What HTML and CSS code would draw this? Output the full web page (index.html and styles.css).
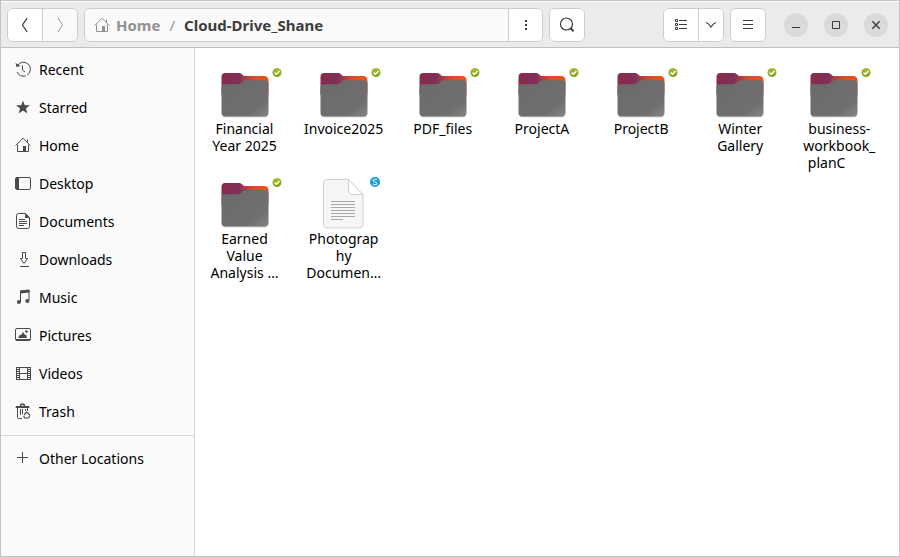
FILE: index.html
```html
<!DOCTYPE html>
<html lang="en">
<head>
  <meta charset="UTF-8" />
  <meta name="viewport" content="width=device-width, initial-scale=1.0" />
  <title>Cloud-Drive_Shane</title>
  <link rel="stylesheet" href="styles.css">
</head>
<body>
  <!-- shared symbols -->
  <svg class="defs" aria-hidden="true">
    <defs>
      <linearGradient id="tab" x1="0" y1="0" x2="1" y2="0">
        <stop offset="0" stop-color="#8a2a4c" />
        <stop offset="0.38" stop-color="#80305a" />
        <stop offset="0.5" stop-color="#a83c48" />
        <stop offset="0.68" stop-color="#d64c2a" />
        <stop offset="1" stop-color="#e95420" />
      </linearGradient>
      <linearGradient id="front" x1="0" y1="0" x2="1" y2="1">
        <stop offset="0" stop-color="#6b6b6b" />
        <stop offset="0.75" stop-color="#6f6f6f" />
        <stop offset="1" stop-color="#858585" />
      </linearGradient>
      <linearGradient id="ok" x1="0" y1="0" x2="0" y2="1">
        <stop offset="0" stop-color="#a3c23a" />
        <stop offset="1" stop-color="#7da010" />
      </linearGradient>
      <symbol id="home" viewBox="0 0 16 16">
        <path d="M.6 8.6 8 1.2l7.4 7.4M2.500 7.500v7h11v-7M12.500 2.500v3" fill="none" stroke="currentColor" />
        <path d="M8 9h3v6H8z" fill="currentColor" />
      </symbol>
      <symbol id="folder" viewBox="0 0 80 55">
        <path d="M20 8h14c1 0 2 .4 3 1.200l2 1.800h20c3 0 4.500 1.500 4.500 4.500V30h-47V11.500C16.500 9.500 18 8 20 8z" fill="url(#tab)" />
        <path d="M16.500 22c0-2 1-2.800 3-2.800h13.500c1.500 0 2.500-.4 3.500-1.400l1.600-1.500c.8-.8 1.600-1.100 2.900-1.100h19c2.500 0 3.500 1 3.500 3V48c0 2.200-1.300 3.500-3.500 3.500H20c-2.200 0-3.500-1.300-3.500-3.500z" fill="url(#front)" />
        <path d="M18 51c1 .6 2 .7 3 .7h38c1 0 2.500-.1 3.300-.9" fill="none" stroke="#a39a96" />
        <circle cx="72" cy="7.500" r="4.500" fill="url(#ok)" />
        <path d="M69.600 7.600l1.800 1.700 3.100-3.200" fill="none" stroke="#fff" stroke-width="1.500" />
      </symbol>
    </defs>
  </svg>

  <div class="window">
    <header class="toolbar">
      <div class="group">
        <button class="btn" aria-label="Back">
          <svg width="16" height="16"><path d="M10 .8C9.500 3 6.500 5.500 5.500 8c1 2.500 4 5 4.500 7.200" fill="none" stroke="currentColor" stroke-width="1.200" /></svg>
        </button>
        <button class="btn faded" aria-label="Forward">
          <svg width="16" height="16"><path d="M6 .8C6.500 3 9.500 5.500 10.500 8c-1 2.500-4 5-4.500 7.200" fill="none" stroke="currentColor" /></svg>
        </button>
      </div>

      <div class="group path">
        <nav class="crumbs">
          <a href="#" class="crumb"><svg width="16" height="16"><use href="#home" /></svg>Home</a>
          <span class="slash">/</span>
          <a href="#" class="crumb current">Cloud-Drive_Shane</a>
        </nav>
        <button class="btn" aria-label="Folder menu">
          <svg width="16" height="16"><path d="M7 3h2v2H7zM7 7h2v2H7zM7 11h2v2H7z" fill="currentColor" /></svg>
        </button>
      </div>

      <div class="group">
        <button class="btn" aria-label="Search">
          <svg width="16" height="16"><circle cx="7.500" cy="7" r="6" fill="none" stroke="currentColor" stroke-width="1.200" /><path d="M11.500 11l3 3.300" stroke="currentColor" stroke-width="1.900" /></svg>
        </button>
      </div>

      <div class="group push">
        <button class="btn" aria-label="List view">
          <svg width="16" height="16"><path d="M2.500 2.500h2v2h-2zM2.500 6.500h2v2h-2zM2.500 10.500h2v2h-2zM6 3.500h8M6 7.500h8M6 11.500h8" fill="none" stroke="currentColor" /></svg>
        </button>
        <button class="btn narrow" aria-label="View options">
          <svg width="16" height="16"><path d="M3 5.500c2 .6 4 2.800 5 4.500 1-1.700 3-3.900 5-4.500" fill="none" stroke="currentColor" stroke-width="1.200" /></svg>
        </button>
      </div>
      <div class="group">
        <button class="btn" aria-label="Main menu">
          <svg width="16" height="16"><path d="M3 3.500h10M3 7.500h10M3 11.500h10" stroke="currentColor" /></svg>
        </button>
      </div>

      <div class="controls">
        <button class="round" aria-label="Minimize"><svg width="16" height="16"><path d="M4 10.500h8" stroke="currentColor" /></svg></button>
        <button class="round" aria-label="Maximize"><svg width="16" height="16"><path d="M4.500 4.500h7v7h-7z" fill="none" stroke="currentColor" /></svg></button>
        <button class="round" aria-label="Close"><svg width="16" height="16"><path d="M4.300 4.300l7.400 7.400M11.700 4.300l-7.400 7.400" stroke="currentColor" stroke-width="1.400" /></svg></button>
      </div>
    </header>

    <div class="body">
      <nav class="sidebar">
        <a href="#" class="place">
          <svg width="16" height="16"><path d="M2.500 4.500A7 7 0 1 1 2 11" fill="none" stroke="currentColor" stroke-dasharray="25 1.500" /><path d="M.5 2l1 4 4-1z" fill="currentColor" /><path d="M7.500 4.500V9l2.500 2" fill="none" stroke="currentColor" /></svg>
          Recent
        </a>
        <a href="#" class="place">
          <svg width="16" height="16"><path d="M8 1.500l1.800 4.700 5.200.1-4.100 3.200 1.500 5L8 11.600l-4.400 2.900 1.500-5L1 6.300l5.200-.1z" fill="currentColor" /></svg>
          Starred
        </a>
        <a href="#" class="place">
          <svg width="16" height="16"><use href="#home" /></svg>
          Home
        </a>
        <a href="#" class="place">
          <svg width="16" height="16"><rect x=".5" y="2.500" width="15" height="12" rx="1.500" fill="none" stroke="currentColor" /><path d="M1 3h3v11H1z" fill="currentColor" /></svg>
          Desktop
        </a>
        <a href="#" class="place">
          <svg width="16" height="16"><path d="M10.500.5h-7a2 2 0 0 0-2 2v11a2 2 0 0 0 2 2h9a2 2 0 0 0 2-2v-9zM4 6.500h6M4 8.500h8M4 10.500h8M4 12.500h5" fill="none" stroke="currentColor" /><path d="M10 .5V5h4.500z" fill="currentColor" /></svg>
          Documents
        </a>
        <a href="#" class="place">
          <svg width="16" height="16"><path d="M7.500 1.500h3v6h2l-3.500 5-3.500-5h2zM5 15.500h9" fill="none" stroke="currentColor" /></svg>
          Downloads
        </a>
        <a href="#" class="place">
          <svg width="16" height="16"><path d="M5.500 13V2l8.500-1v10.500" fill="none" stroke="currentColor" /><path d="M5 1.700l9.500-1v2.800L5 4.500z" fill="currentColor" /><circle cx="3.900" cy="13" r="2" fill="currentColor" /><circle cx="12.300" cy="12" r="2" fill="currentColor" /></svg>
          Music
        </a>
        <a href="#" class="place">
          <svg width="16" height="16"><rect x=".5" y="1.500" width="15" height="12" rx="1.500" fill="none" stroke="currentColor" /><path d="M1 12h14v2H1zM3 11l2-3.500 1 .8L8 5l2 3 1-.5 1 3.500z" fill="currentColor" /><circle cx="11.500" cy="4.500" r="1.300" fill="currentColor" /></svg>
          Pictures
        </a>
        <a href="#" class="place">
          <svg width="16" height="16"><path d="M4.500 2v13M12.500 2v13M4 2.500h9M4 8.500h9M4 14.500h9" fill="none" stroke="currentColor" /><path d="M2.500 2v13M14.500 2v13" stroke="currentColor" stroke-width="3" stroke-dasharray="1 1" /><path d="M1.500 2v13M15.500 2v13" stroke="currentColor" /></svg>
          Videos
        </a>
        <a href="#" class="place">
          <svg width="16" height="16"><path d="M1 3h13l.5 2H.5zM5 3V1.500L6 .5h3l1 1V3H8.500V2h-2v1z" fill="currentColor" /><path d="M2.500 5v9.500a1 1 0 0 0 1 1H7M12.500 5v3M5.500 6v6M7.500 6v5M10.500 6v2" fill="none" stroke="currentColor" /><path d="M9 12l2.500-3 3.500 3M14.800 12.500L13.500 15H9.500L8.700 13" fill="none" stroke="currentColor" stroke-width="1.200" /></svg>
          Trash
        </a>
        <hr class="line" />
        <a href="#" class="place">
          <svg width="16" height="16"><path d="M7.500 2v11M2 7.500h11" stroke="currentColor" /></svg>
          Other Locations
        </a>
      </nav>

      <main class="files">
        <div class="file">
          <svg class="icon" width="80" height="55"><use href="#folder" /></svg>
          <div class="name">Financial<br>Year 2025</div>
        </div>
        <div class="file">
          <svg class="icon" width="80" height="55"><use href="#folder" /></svg>
          <div class="name">Invoice2025</div>
        </div>
        <div class="file">
          <svg class="icon" width="80" height="55"><use href="#folder" /></svg>
          <div class="name">PDF_files</div>
        </div>
        <div class="file">
          <svg class="icon" width="80" height="55"><use href="#folder" /></svg>
          <div class="name">ProjectA</div>
        </div>
        <div class="file">
          <svg class="icon" width="80" height="55"><use href="#folder" /></svg>
          <div class="name">ProjectB</div>
        </div>
        <div class="file">
          <svg class="icon" width="80" height="55"><use href="#folder" /></svg>
          <div class="name">Winter<br>Gallery</div>
        </div>
        <div class="file">
          <svg class="icon" width="80" height="55"><use href="#folder" /></svg>
          <div class="name">business-<br>workbook_<br>planC&nbsp;&nbsp;&nbsp;&nbsp;&nbsp;&nbsp;&nbsp;</div>
        </div>
        <div class="file">
          <svg class="icon" width="80" height="55"><use href="#folder" /></svg>
          <div class="name">Earned<br>Value<br>Analysis …</div>
        </div>
        <div class="file">
          <svg class="icon" width="80" height="55">
            <path d="M23.500 4.500h21l14.500 15V49c0 2.500-1.500 4-4 4H23.500c-2.500 0-4-1.500-4-4V8.500c0-2.500 1.500-4 4-4z" fill="#f6f6f6" stroke="#cfcfcf" />
            <path d="M44.500 4.500V15c0 3 1.500 4.500 4.500 4.500h10z" fill="#fff" stroke="#cfcfcf" />
            <path d="M27 26.500h24M27 29.500h24M27 32.500h24M27 35.500h24M27 38.500h24M27 41.500h24M27 44.500h12" stroke="#a8a8a8" />
            <circle cx="71" cy="7" r="5" fill="#1b9bd7" />
            <path d="M73 4.800c-1.500-1-3.800-.6-3.800.8 0 1.500 3.700 1.200 3.700 2.800 0 1.300-2.400 1.700-4 .6" fill="none" stroke="#d4eefa" stroke-width="1.100" />
          </svg>
          <div class="name">Photograp<br>hy<br>Documen…</div>
        </div>
      </main>
    </div>
  </div>
</body>
</html>
```

FILE: styles.css
```css
:root {
  --bar: #ebebeb;
  --edge: #c4c4c4;
  --side: #fafafa;
  --ink: #3d3d3d;
}
* {
  box-sizing: border-box;
}
body {
  margin: 0;
  font-family: "Noto Sans", "Open Sans", sans-serif;
  font-size: 14px;
  color: #000;
}
a {
  color: inherit;
  text-decoration: none;
}
svg {
  display: block;
  flex: none;
}
.defs {
  position: absolute;
  width: 0;
  height: 0;
}
.window {
  display: flex;
  flex-direction: column;
  min-height: 100vh;
  border: 1px solid var(--edge);
  background: #fff;
}

/* toolbar */
.toolbar {
  display: flex;
  align-items: center;
  gap: 6px;
  height: 47px;
  padding: 0 11px 0 6px;
  background: var(--bar);
  border-top: 1px solid #fff;
  border-bottom: 1px solid #bfbfbf;
  color: var(--ink);
}
.group {
  display: flex;
  height: 34px;
  border: 1px solid #cdcdcd;
  border-radius: 6px;
  overflow: hidden;
  background: #fff;
}
.btn {
  display: flex;
  align-items: center;
  justify-content: center;
  width: 34px;
  padding: 0;
  border: none;
  background: #fff;
  color: var(--ink);
}
.btn + .btn, .crumbs + .btn {
  border-left: 1px solid #cdcdcd;
}
.btn.faded {
  width: 35px;
  background: var(--side);
  color: #929292;
}
.btn.narrow {
  width: 25px;
}
.path {
  flex: 1;
}
.crumbs {
  display: flex;
  flex: 1;
  align-items: center;
  gap: 9px;
  padding: 0 9px;
  background: var(--side);
  font-size: 15px;
  font-weight: bold;
}
.crumb {
  display: flex;
  align-items: center;
  gap: 6px;
  color: #929292;
}
.crumb.current {
  color: var(--ink);
}
.slash {
  color: #929292;
  font-weight: normal;
}
.push {
  margin-left: 72px;
}
.controls {
  display: flex;
  gap: 16px;
  margin-left: 12px;
}
.round {
  display: flex;
  align-items: center;
  justify-content: center;
  width: 24px;
  height: 24px;
  padding: 0;
  border: none;
  border-radius: 50%;
  background: #dadada;
  color: var(--ink);
}

/* content */
.body {
  display: flex;
  flex: 1;
}
.sidebar {
  flex: none;
  width: 194px;
  padding-top: 2px;
  background: var(--side);
  border-right: 1px solid #dadada;
}
.place {
  display: flex;
  align-items: center;
  gap: 8px;
  height: 38px;
  padding-left: 14px;
}
.place svg {
  color: #4a4a4a;
}
.line {
  margin: 5px 0 3px;
  border: none;
  border-top: 1px solid #dadada;
}
.files {
  display: grid;
  flex: 1;
  grid-template-columns: repeat(6, 99fr) 89fr;
  align-content: start;
  row-gap: 4px;
  padding: 17px 20px 0 0;
}
.icon {
  margin: 0 auto;
}
.file {
  min-width: 0;
}
.name {
  width: 99px;
  line-height: 17px;
  text-align: center;
  white-space: nowrap;
}
```
